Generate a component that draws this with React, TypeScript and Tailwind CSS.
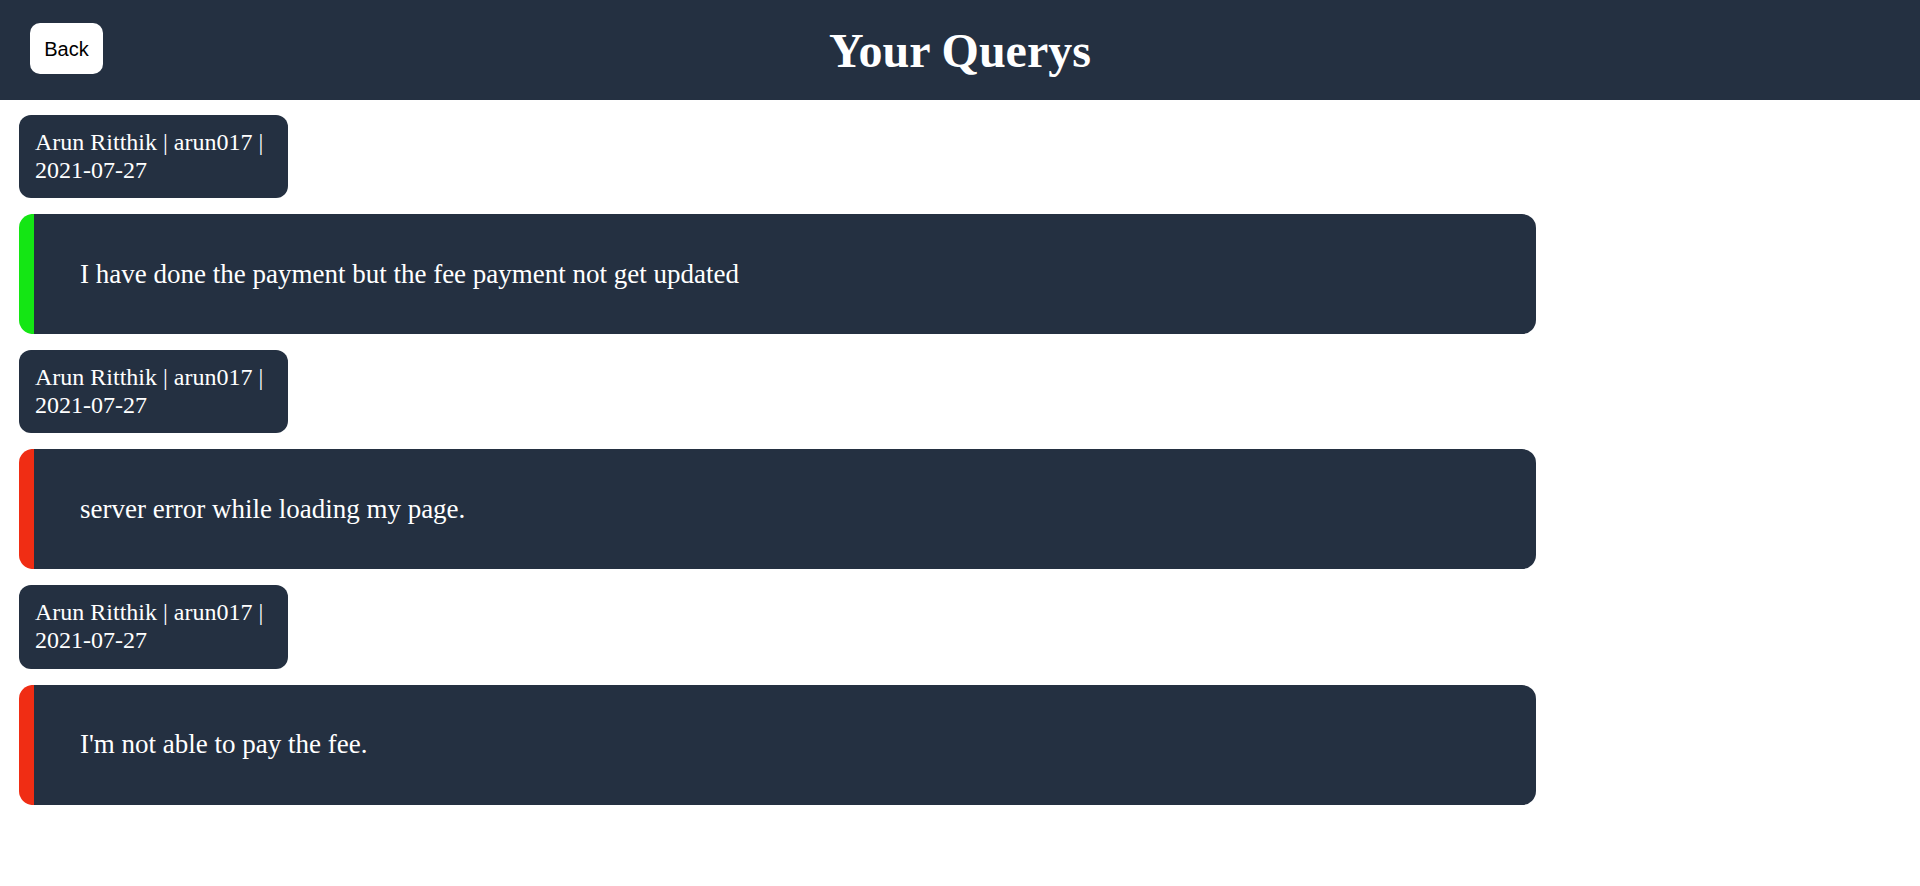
import React from "react";

const queries = [
  { text: "I have done the payment but the fee payment not get updated", resolved: true },
  { text: "server error while loading my page.", resolved: false },
  { text: "I'm not able to pay the fee.", resolved: false },
];

export default function App() {
  return (
    <div className="min-h-screen bg-white" style={{ fontFamily: '"Liberation Serif", "Times New Roman", serif' }}>
      <header className="relative flex h-[100px] items-center justify-center bg-[#243041]">
        <button
          className="absolute left-[30px] top-[23px] h-[51px] w-[73px] rounded-[10px] bg-white text-[20px] text-black"
          style={{ fontFamily: '"Liberation Sans", Arial, sans-serif' }}
        >
          Back
        </button>
        <h1 className="text-[48px] font-bold leading-[55px] text-white">Your Querys</h1>
      </header>
      <main className="flex flex-col gap-4 pl-[19px] pt-[15px]">
        {queries.map((q, i) => (
          <div key={i} className="flex flex-col gap-4">
            <div className="w-[269px] rounded-[12px] bg-[#243041] px-4 py-[14px] text-[24px] leading-[27.6px] text-white">
              Arun Ritthik | arun017 | 2021-07-27
            </div>
            <div
              className={`flex h-[120px] w-[1517px] items-center rounded-[14px] border-l-[15px] bg-[#243041] pl-[46px] text-[27px] text-white ${
                q.resolved ? "border-[#14e614]" : "border-[#f02d14]"
              }`}
            >
              {q.text}
            </div>
          </div>
        ))}
      </main>
    </div>
  );
}
